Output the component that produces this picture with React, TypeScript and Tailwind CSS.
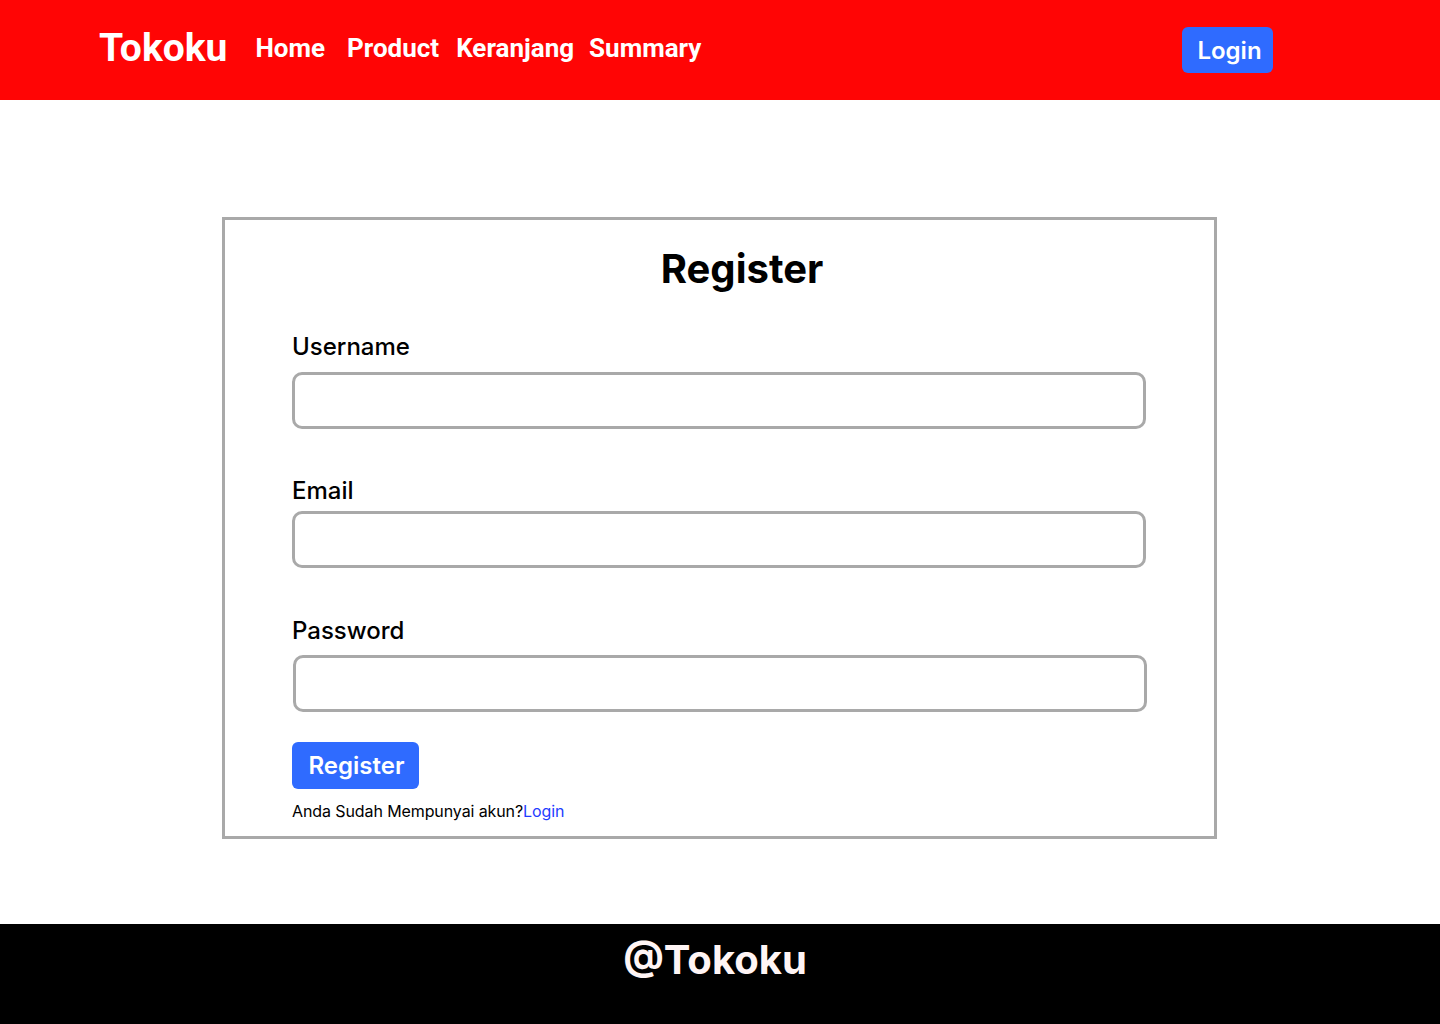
import React from "react";

const navLinks = [
  { label: "Home", gap: "mr-[22px]" },
  { label: "Product", gap: "mr-[17px]" },
  { label: "Keranjang", gap: "mr-[15px]" },
  { label: "Summary", gap: "" },
];

function Field({ label, className }: { label: string; className?: string }) {
  return (
    <div className={className}>
      <label className="block text-[24px] leading-[32px] font-medium text-black">
        {label}
      </label>
    </div>
  );
}

export default function App() {
  return (
    <div className="min-h-[1024px] flex flex-col bg-white font-['Inter',sans-serif]">
      {/* Navbar */}
      <header className="h-[100px] bg-[#ff0505] flex items-center justify-between pl-[99px] pr-[167px]">
        <div className="flex items-center font-['Roboto',sans-serif] text-white font-bold -mt-[5px]">
          <span className="text-[39px] leading-[46px] mr-[28px]">Tokoku</span>
          <nav className="flex items-center text-[26px] leading-[34px]">
            {navLinks.map((l) => (
              <a key={l.label} href="#" className={l.gap}>
                {l.label}
              </a>
            ))}
          </nav>
        </div>
        <button className="h-[46px] w-[91px] rounded-[6px] bg-[#2f6bff] text-white text-[24px] font-semibold leading-none pl-[4px] pt-[2px]">
          Login
        </button>
      </header>

      {/* Main */}
      <main className="flex-1 flex justify-center pt-[117px]">
        <div className="w-[995px] h-[622px] border-[3px] border-[#a9a9a9] pt-[25px] pl-[67px] pr-[68px] -ml-[1px]">
          <h1 className="text-center text-[40px] leading-[48px] font-bold text-black pl-[46px]">
            Register
          </h1>
          <Field label="Username" className="mt-[38px]" />
          <input className="mt-[9px] block w-[854px] h-[57px] rounded-[10px] border-[3px] border-[#a9a9a9] outline-none" />
          <Field label="Email" className="mt-[46px]" />
          <input className="mt-[4px] block w-[854px] h-[57px] rounded-[10px] border-[3px] border-[#a9a9a9] outline-none" />
          <Field label="Password" className="mt-[47px]" />
          <input className="mt-[8px] ml-[1px] block w-[854px] h-[57px] rounded-[10px] border-[3px] border-[#a9a9a9] outline-none" />
          <button className="mt-[30px] h-[47px] w-[127px] rounded-[6px] bg-[#2f6bff] text-white text-[24px] font-semibold leading-none pl-[2px]">
            Register
          </button>
          <p className="mt-[10px] text-[16px] leading-[24px] text-black tracking-[-0.1px]">
            Anda Sudah Mempunyai akun?
            <a href="#" className="text-[#1f3dff]">
              Login
            </a>
          </p>
        </div>
      </main>

      {/* Footer */}
      <footer className="mt-[85px] h-[100px] bg-black flex justify-center">
        <span className="mt-[12px] text-[40px] leading-[48px] font-bold text-[#fff5f5] pr-[10px]">
          @Tokoku
        </span>
      </footer>
    </div>
  );
}
